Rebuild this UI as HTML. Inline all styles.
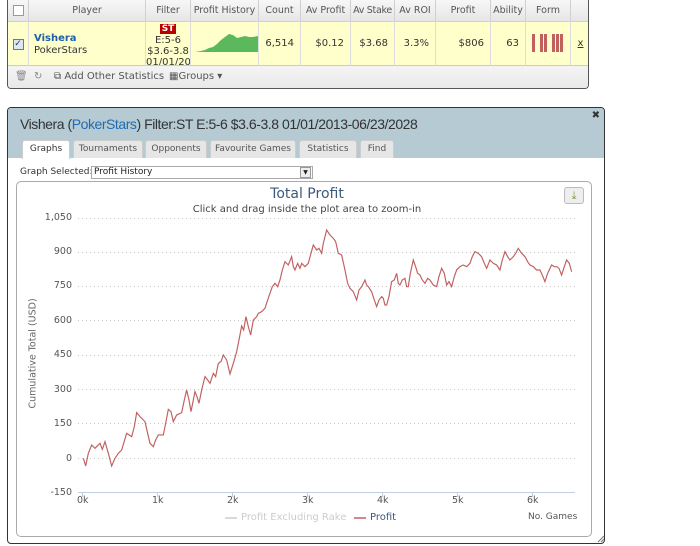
<!DOCTYPE html>
<html><head><meta charset="utf-8"><style>
*{box-sizing:border-box;margin:0;padding:0}
body{width:700px;height:546px;background:#fff;font-family:"DejaVu Sans","Liberation Sans",sans-serif;font-size:10px;color:#333;position:relative;overflow:hidden}
.abs{position:absolute}
#top{left:7px;top:0;width:582px;height:89px;border:1px solid #555;border-top:none;border-radius:0 0 4px 4px;background:#f2f2f2;overflow:hidden}
.hdr{position:absolute;top:0;height:22px;background:linear-gradient(#f7f7f7,#e6e6e6);border-right:1px solid #d0d0d0;border-bottom:1px solid #d0d0d0;text-align:center;line-height:22px;color:#555;white-space:nowrap;font-size:9.5px;overflow:hidden}
.cell{position:absolute;top:22px;height:44px;background:#ffffcc;border-right:1px solid #ddd;border-bottom:1px solid #ccc;color:#333}
.num{text-align:right;line-height:44px;padding-right:6px}
#bot{left:7px;top:107px;width:598px;height:437px;border:1px solid #333;border-radius:4px;background:#fff;overflow:hidden}
.tab{position:absolute;top:32px;height:18px;background:#e6e6e6;border:1px solid #ccc;border-bottom:none;border-radius:3px 3px 0 0;font-size:9px;line-height:17px;text-align:center;color:#555;white-space:nowrap}
.yl{position:absolute;right:628px;font-size:9.5px;color:#555;text-align:right}
.xl{position:absolute;top:495px;font-size:9.5px;color:#555}
</style></head><body>
<div id="top" class="abs">
 <div class="hdr" style="left:0;width:21px"><div style="width:11px;height:11px;border:1px solid #999;background:#fff;margin:5px auto"></div></div>
 <div class="hdr" style="left:21px;width:117px">Player</div>
 <div class="hdr" style="left:138px;width:45px">Filter</div>
 <div class="hdr" style="left:183px;width:68px">Profit History</div>
 <div class="hdr" style="left:251px;width:42px">Count</div>
 <div class="hdr" style="left:293px;width:50px">Av Profit</div>
 <div class="hdr" style="left:343px;width:44px;letter-spacing:-0.3px">Av Stake</div>
 <div class="hdr" style="left:387px;width:41px">Av ROI</div>
 <div class="hdr" style="left:428px;width:55px">Profit</div>
 <div class="hdr" style="left:483px;width:35px">Ability</div>
 <div class="hdr" style="left:518px;width:45px">Form</div>
 <div class="hdr" style="left:563px;width:19px;border-right:none"></div>

 <div class="cell" style="left:0;width:21px"><div style="width:11px;height:11px;border:1px solid #777;background:#dde6f5;margin:17px auto 0;font-size:9px;line-height:9px;text-align:center;color:#335">✓</div></div>
 <div class="cell" style="left:21px;width:117px;padding:11px 0 0 5px;line-height:12px"><b style="color:#1f5fa8">Vishera</b><br>PokerStars</div>
 <div class="cell" style="left:138px;width:45px;text-align:center;line-height:11px;overflow:hidden;padding-top:1px"><span style="background:#b00;color:#fff;font-weight:bold;font-size:9px;padding:0 2px">ST</span><br>E:5-6<br>$3.6-3.8<br><span style="white-space:nowrap">01/01/20</span></div>
 <div class="cell" style="left:183px;width:68px"><svg width="68" height="44" style="position:absolute;left:0;top:0"><path d="M4,30 L10,29 14,28 18,26 22,25 26,22 30,18 34,15 38,12 42,13 46,16 50,15 54,14 58,15 62,15 67,14 67,30 Z" fill="#5cb85c"/></svg></div>
 <div class="cell num" style="left:251px;width:42px">6,514</div>
 <div class="cell num" style="left:293px;width:50px">$0.12</div>
 <div class="cell num" style="left:343px;width:44px">$3.68</div>
 <div class="cell num" style="left:387px;width:41px">3.3%</div>
 <div class="cell num" style="left:428px;width:55px">$806</div>
 <div class="cell num" style="left:483px;width:35px">63</div>
 <div class="cell" style="left:518px;width:45px"><svg width="45" height="44" style="position:absolute;left:0;top:0"><g fill="#c0605f"><rect x="6" y="12" width="3" height="18"/><rect x="14" y="12" width="3" height="18"/><rect x="18" y="12" width="3" height="18"/><rect x="26" y="12" width="3" height="18"/><rect x="30" y="12" width="3" height="18"/><rect x="34" y="12" width="3" height="18"/></g></svg></div>
 <div class="cell" style="left:563px;width:19px;text-align:center;line-height:44px;text-decoration:underline;border-right:none">x</div>
 <div class="abs" style="left:0;top:67px;width:582px;height:22px;background:linear-gradient(#f4f4f4,#e8e8e8);color:#555;line-height:20px;font-size:10px">
  <span style="position:absolute;left:7px;color:#888">🗑</span><span style="position:absolute;left:26px;color:#888">↻</span><span style="position:absolute;left:46px">⧉ Add Other Statistics</span><span style="position:absolute;left:161px">▦Groups ▾</span>
 </div>
</div>

<div id="bot" class="abs">
 <div class="abs" style="left:0;top:0;width:598px;height:50px;background:#b5cad2"></div>
 <div class="abs" style="left:12px;top:8px;font-family:'Liberation Sans',sans-serif;font-size:14px;letter-spacing:-0.45px;color:#333;white-space:nowrap">Vishera (<span style="color:#1f6cb0">PokerStars</span>) Filter:ST E:5-6 $3.6-3.8 01/01/2013-06/23/2028</div>
 <div class="abs" style="right:4px;top:2px;font-size:10px;font-weight:bold">✖</div>
 <div class="tab" style="left:14px;width:48px;background:#fff;color:#333;height:19px">Graphs</div>
 <div class="tab" style="left:65px;width:70px">Tournaments</div>
 <div class="tab" style="left:137px;width:62px">Opponents</div>
 <div class="tab" style="left:202px;width:86px">Favourite Games</div>
 <div class="tab" style="left:291px;width:58px">Statistics</div>
 <div class="tab" style="left:352px;width:34px">Find</div>
 <div class="abs" style="left:12px;top:59px;font-size:9px;color:#333">Graph Selected:</div>
 <div class="abs" style="left:83px;top:58px;width:222px;height:13px;border:1px solid #aaa;font-size:9px;line-height:11px;padding-left:2px;color:#222">Profit History<span style="position:absolute;right:1px;top:0;width:11px;height:11px;border:1px solid #999;background:#eee;font-size:6px;text-align:center;line-height:10px">▼</span></div>
 <div class="abs" style="left:8px;top:73px;width:576px;height:356px;border:1px solid #aaa;border-radius:5px"></div>
</div>

<div class="abs" style="left:0;top:186px;width:614px;text-align:center;font-size:14px;color:#3d5a7a;font-family:'DejaVu Sans',sans-serif">Total Profit</div>
<div class="abs" style="left:0;top:204px;width:614px;text-align:center;font-size:10px;color:#444">Click and drag inside the plot area to zoom-in</div>
<div class="abs" style="left:564px;top:187px;width:20px;height:17px;border:1px solid #bbb;border-radius:3px;background:#eee;color:#7a9a3a;text-align:center;font-size:11px;line-height:15px">⤓</div>

<div class="yl" style="top:212px">1,050</div>
<div class="yl" style="top:246px">900</div>
<div class="yl" style="top:280px">750</div>
<div class="yl" style="top:315px">600</div>
<div class="yl" style="top:349px">450</div>
<div class="yl" style="top:384px">300</div>
<div class="yl" style="top:418px">150</div>
<div class="yl" style="top:453px">0</div>
<div class="yl" style="top:487px">-150</div>
<div class="abs" style="left:-22px;top:348px;transform:rotate(-90deg);font-size:9.5px;color:#666;white-space:nowrap;width:110px;text-align:center">Cumulative Total (USD)</div>

<svg class="abs" style="left:0;top:0" width="700" height="546">
 <g stroke="#c8c8c8" stroke-dasharray="1,3" stroke-width="1">
  <line x1="78" x2="575" y1="218.5" y2="218.5"/><line x1="78" x2="575" y1="252.5" y2="252.5"/><line x1="78" x2="575" y1="286.5" y2="286.5"/><line x1="78" x2="575" y1="320.5" y2="320.5"/><line x1="78" x2="575" y1="355.5" y2="355.5"/><line x1="78" x2="575" y1="389.5" y2="389.5"/><line x1="78" x2="575" y1="423.5" y2="423.5"/><line x1="78" x2="575" y1="458.5" y2="458.5"/>
 </g>
 <line x1="78" x2="575" y1="492.5" y2="492.5" stroke="#c0d0e0"/>
 <g stroke="#c0d0e0"><line x1="82.5" x2="82.5" y1="492" y2="497"/><line x1="157.5" x2="157.5" y1="492" y2="497"/><line x1="232.5" x2="232.5" y1="492" y2="497"/><line x1="307.5" x2="307.5" y1="492" y2="497"/><line x1="382.5" x2="382.5" y1="492" y2="497"/><line x1="457.5" x2="457.5" y1="492" y2="497"/><line x1="532.5" x2="532.5" y1="492" y2="497"/></g>
 <g transform="translate(75,220) scale(0.3333)">
 <path fill="none" stroke="#c0605f" stroke-width="3.5" d="M25,715 L32,738 40,700 50,675 60,685 75,670 82,688 90,665 100,700 110,738 120,715 130,700 140,690 155,640 170,650 178,620 185,578 195,590 210,605 218,640 225,670 235,680 242,660 250,645 265,645 272,610 280,568 288,575 295,605 305,585 320,578 328,540 335,510 342,540 348,575 355,540 360,515 366,530 372,550 380,510 390,470 398,480 405,490 415,460 422,470 430,430 438,425 445,405 455,420 465,462 475,430 485,395 492,360 500,318 506,330 513,290 520,320 527,345 535,300 545,290 550,280 560,275 570,265 578,240 585,220 592,200 600,190 608,200 615,180 622,150 630,125 640,135 650,110 655,140 660,150 668,130 675,145 680,130 690,140 700,130 708,100 715,75 725,90 732,85 740,100 745,70 755,30 765,45 775,55 782,65 790,100 800,105 810,150 818,190 825,205 835,215 845,240 852,210 860,200 870,180 875,195 880,200 890,215 898,240 905,260 912,240 920,230 925,235 930,255 935,255 942,230 950,185 958,180 965,160 970,190 975,195 982,180 990,175 995,200 1000,200 1006,160 1015,120 1022,140 1028,160 1035,165 1042,180 1050,190 1058,175 1065,180 1075,195 1085,200 1092,170 1100,145 1108,160 1115,195 1122,185 1130,200 1138,170 1145,150 1155,140 1165,135 1175,140 1185,130 1192,110 1200,95 1210,100 1220,110 1228,130 1235,145 1245,120 1255,130 1265,135 1275,150 1282,120 1290,95 1298,110 1305,120 1315,110 1322,100 1330,85 1340,100 1350,110 1358,125 1365,135 1375,140 1385,150 1395,150 1402,165 1410,185 1418,160 1430,135 1438,140 1445,140 1452,145 1460,165 1468,140 1475,120 1483,130 1490,155"/>
 </g>
 <line x1="225" x2="237" y1="518" y2="518" stroke="#ccc" stroke-width="1.5"/>
 <line x1="354" x2="366" y1="518" y2="518" stroke="#c0605f" stroke-width="1.5"/>
 <path d="M598,542 L604,536 M601,542 L604,539" stroke="#777"/>
</svg>
<div class="xl" style="left:77px">0k</div>
<div class="xl" style="left:152px">1k</div>
<div class="xl" style="left:227px">2k</div>
<div class="xl" style="left:302px">3k</div>
<div class="xl" style="left:377px">4k</div>
<div class="xl" style="left:452px">5k</div>
<div class="xl" style="left:527px">6k</div>
<div class="abs" style="left:241px;top:512px;font-size:10px;color:#ccc">Profit Excluding Rake</div>
<div class="abs" style="left:370px;top:512px;font-size:10px;color:#3d5a7a">Profit</div>
<div class="abs" style="left:528px;top:512px;font-size:9px;color:#555">No. Games</div>
</body></html>
